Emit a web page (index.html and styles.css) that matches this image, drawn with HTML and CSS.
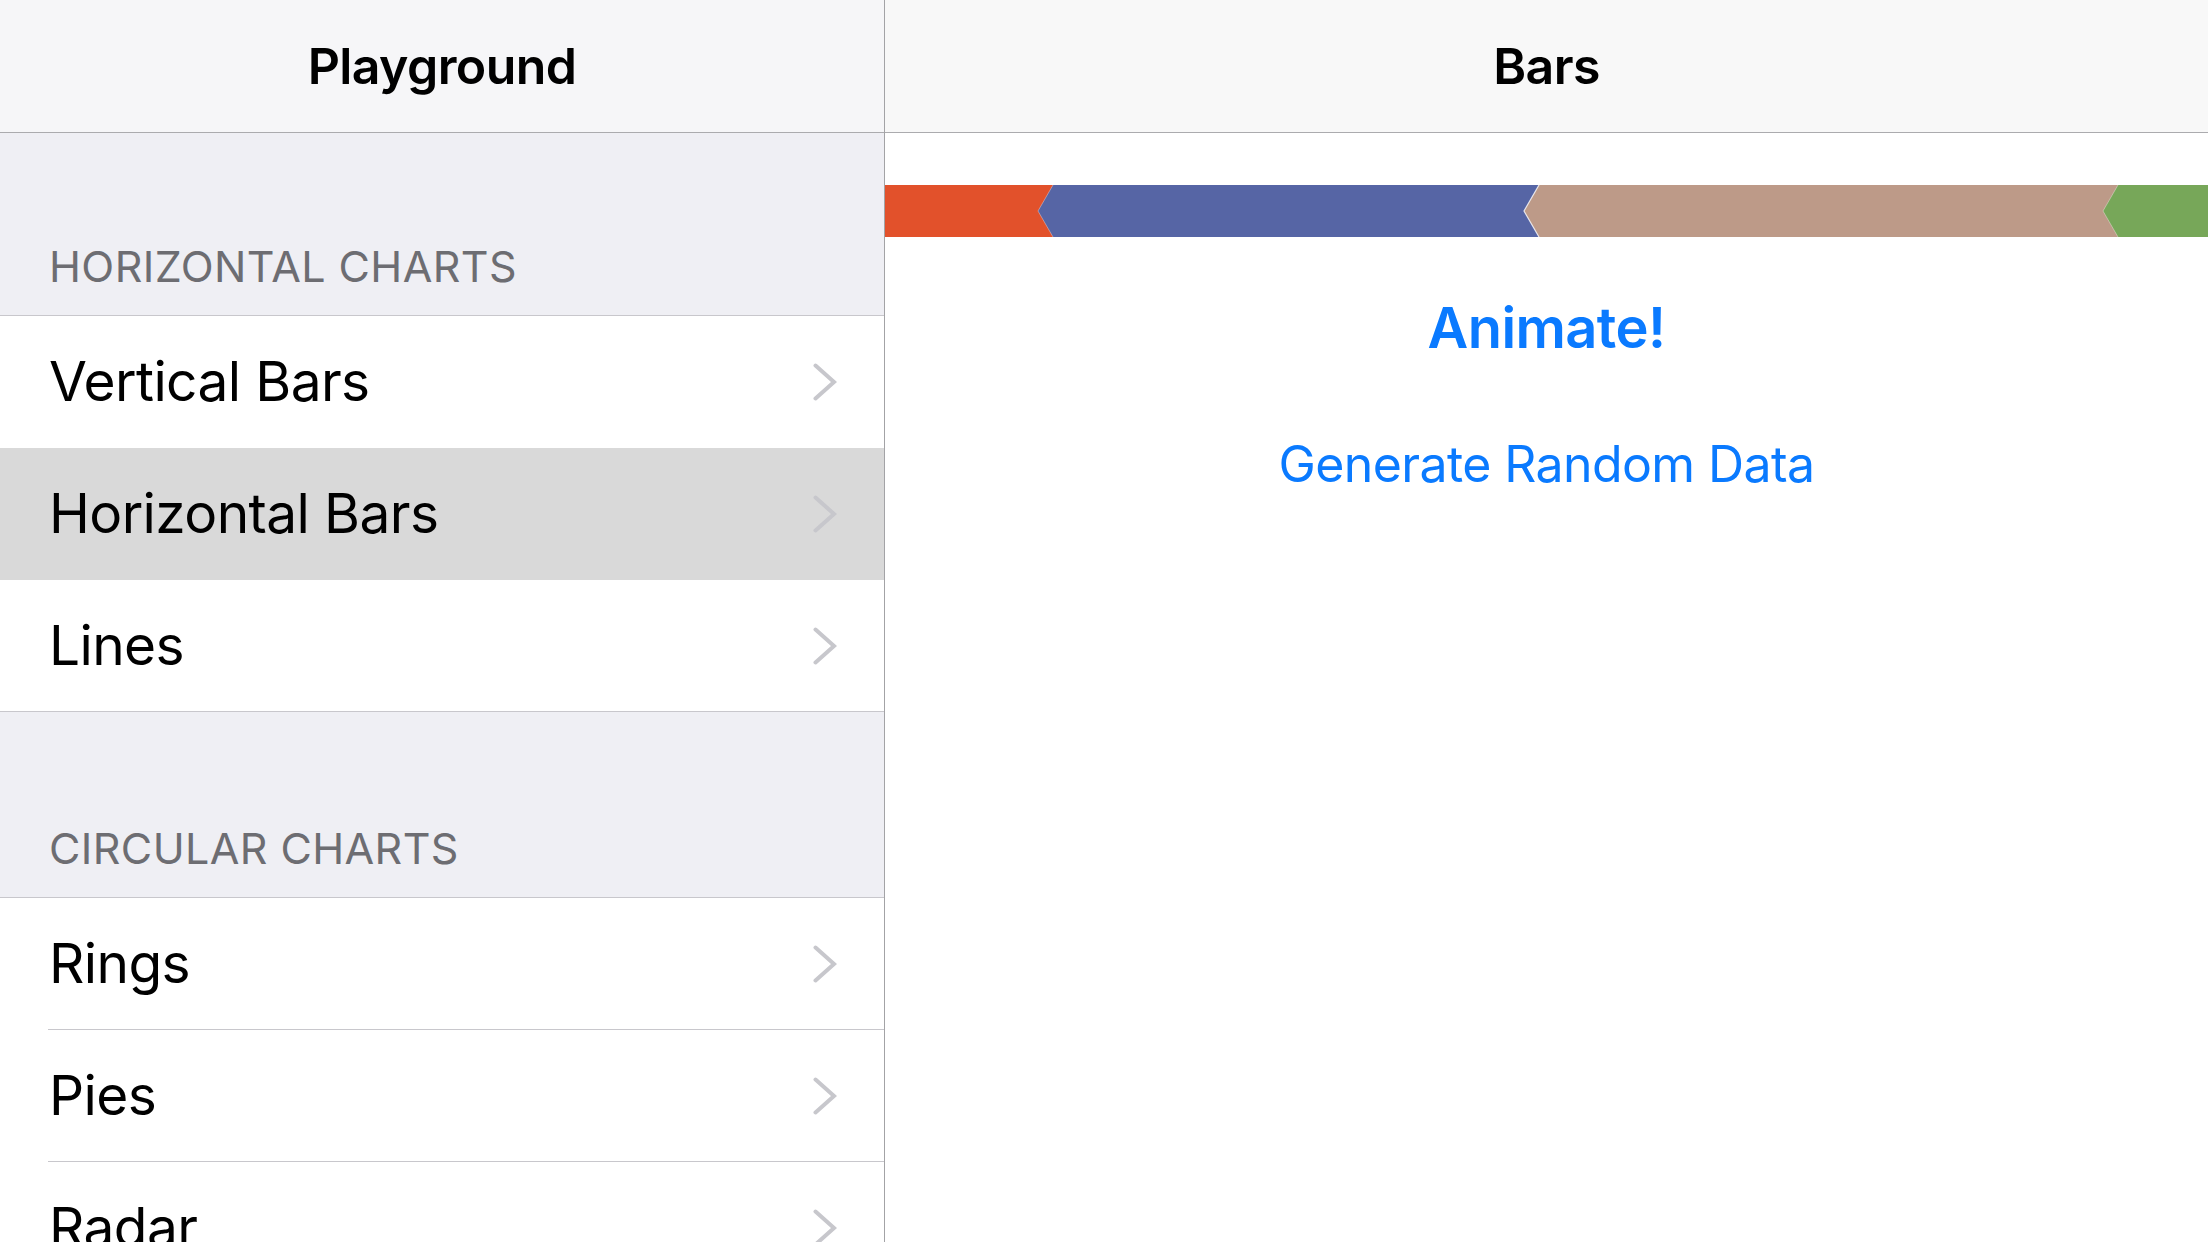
FILE: index.html
```html
<!DOCTYPE html>
<html>
<head>
<meta charset="utf-8">
<title>Playground</title>
<link rel="stylesheet" href="styles.css">
</head>
<body>
<div class="app">
  <aside class="sidebar">
    <header class="navbar navbar-left"><h1 class="nav-title">Playground</h1></header>
    <div class="section-header first">Horizontal Charts</div>
    <div class="group">
      <div class="row"><div class="row-inner no-sep"><span class="row-label">Vertical Bars</span><svg class="chev" width="24" height="38" viewBox="0 0 24 38"><path d="M2.5 2.5 L21 19 L2.5 35.5" /></svg></div></div>
      <div class="row selected"><div class="row-inner no-sep"><span class="row-label">Horizontal Bars</span><svg class="chev" width="24" height="38" viewBox="0 0 24 38"><path d="M2.5 2.5 L21 19 L2.5 35.5" /></svg></div></div>
      <div class="row"><div class="row-inner no-sep"><span class="row-label">Lines</span><svg class="chev" width="24" height="38" viewBox="0 0 24 38"><path d="M2.5 2.5 L21 19 L2.5 35.5" /></svg></div></div>
    </div>
    <div class="section-header second">Circular Charts</div>
    <div class="group">
      <div class="row"><div class="row-inner"><span class="row-label">Rings</span><svg class="chev" width="24" height="38" viewBox="0 0 24 38"><path d="M2.5 2.5 L21 19 L2.5 35.5" /></svg></div></div>
      <div class="row"><div class="row-inner"><span class="row-label">Pies</span><svg class="chev" width="24" height="38" viewBox="0 0 24 38"><path d="M2.5 2.5 L21 19 L2.5 35.5" /></svg></div></div>
      <div class="row"><div class="row-inner no-sep"><span class="row-label">Radar</span><svg class="chev" width="24" height="38" viewBox="0 0 24 38"><path d="M2.5 2.5 L21 19 L2.5 35.5" /></svg></div></div>
    </div>
  </aside>
  <main class="detail">
    <header class="navbar navbar-right"><h1 class="nav-title">Bars</h1></header>
    <div class="chart">
      <svg width="1323" height="52" viewBox="0 0 1323 52">
        <rect x="0" y="0" width="170" height="52" fill="#e2512b"/>
        <polygon points="168,0 656,0 656,52 168,52 153,26" fill="#5665a5"/>
        <polygon points="654,0 1235,0 1235,52 654,52 639,26" fill="#bd9a88"/>
        <polygon points="1233,0 1323,0 1323,52 1233,52 1218,26" fill="#77a759"/>
        <polyline points="168,0 153,26 168,52" fill="none" stroke="#ffffff" stroke-opacity="0.35" stroke-width="1"/>
        <polyline points="654,0 639,26 654,52" fill="none" stroke="#ffffff" stroke-opacity="0.8" stroke-width="1.2"/>
        <polyline points="1233,0 1218,26 1233,52" fill="none" stroke="#ffffff" stroke-opacity="0.35" stroke-width="1"/>
      </svg>
    </div>
    <div class="actions">
      <button class="btn btn-animate" type="button">Animate!</button>
      <button class="btn btn-generate" type="button">Generate Random Data</button>
    </div>
  </main>
</div>
</body>
</html>
```
FILE: styles.css
```css
* { box-sizing: border-box; }
html, body {
  margin: 0;
  padding: 0;
  width: 2208px;
  height: 1242px;
  overflow: hidden;
  background: #ffffff;
  font-family: "Inter", "Roboto", "Liberation Sans", sans-serif;
  color: #000000;
}
.app {
  display: flex;
  width: 2208px;
  height: 1242px;
}
.sidebar {
  width: 885px;
  flex: 0 0 885px;
  background: #efeff4;
  border-right: 1px solid #a3a3a6;
  overflow: hidden;
}
.detail {
  flex: 1;
  background: #ffffff;
  overflow: hidden;
}
.navbar {
  height: 133px;
  border-bottom: 1px solid #ababae;
  display: flex;
  align-items: center;
  justify-content: center;
}
.navbar-left { background: #f6f6f8; }
.navbar-right { background: #f8f8f8; }
.nav-title {
  margin: 0;
  font-size: 50px;
  font-weight: 600;
  letter-spacing: -0.6px;
  line-height: 60px;
}
.section-header {
  display: flex;
  align-items: flex-end;
  padding-left: 49px;
  padding-bottom: 27px;
  text-transform: uppercase;
  color: #6d6d72;
  font-size: 43px;
  line-height: 43px;
  letter-spacing: 0.4px;
  border-bottom: 1px solid #c8c7cc;
}
.section-header.first { height: 183px; }
.section-header.second { height: 186px; }
.group {
  background: #ffffff;
  border-bottom: 1px solid #c8c7cc;
}
.row {
  height: 132px;
  padding-left: 48px;
  display: flex;
  background: #ffffff;
}
.row:last-child { height: 131px; }
.row.selected { background: #d9d9d9; }
.row-inner {
  flex: 1;
  display: flex;
  align-items: center;
  justify-content: space-between;
  padding-right: 47px;
  border-bottom: 1px solid #c8c7cc;
}
.row-inner.no-sep { border-bottom: none; }
.row-label {
  font-size: 55px;
  line-height: 66px;
  letter-spacing: -0.6px;
  padding-left: 1px;
  margin-top: -2px;
}
.chev path {
  fill: none;
  stroke: #c7c7cc;
  stroke-width: 4;
  stroke-linecap: round;
  stroke-linejoin: miter;
}
.chart {
  margin-top: 52px;
  height: 52px;
  line-height: 0;
}
.chart svg { display: block; }
.actions {
  display: flex;
  flex-direction: column;
  align-items: center;
}
.btn {
  border: none;
  background: none;
  padding: 0;
  margin: 0;
  font-family: inherit;
  color: #0a7aff;
  cursor: pointer;
}
.btn-animate {
  margin-top: 57px;
  font-size: 56px;
  font-weight: 600;
  line-height: 68px;
  letter-spacing: -0.6px;
}
.btn-generate {
  margin-top: 72px;
  font-size: 50px;
  font-weight: 400;
  line-height: 60px;
  letter-spacing: -0.6px;
}
```
